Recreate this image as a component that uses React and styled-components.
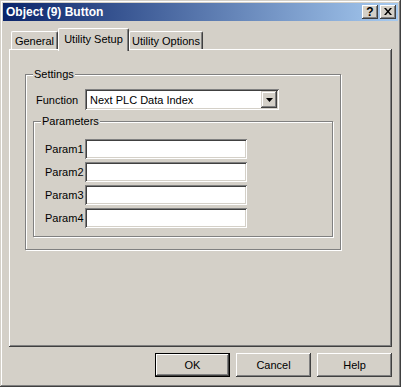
import React from 'react';
import styled, { createGlobalStyle } from 'styled-components';

const GlobalStyle = createGlobalStyle`
	html, body {
		margin: 0;
		padding: 0;
		background: #d4d0c8;
	}
	body {
		font-family: "Liberation Sans", Arial, sans-serif;
		font-size: 11px;
		color: #000;
	}
`;

const raised = `
	box-shadow: inset -1px -1px #404040, inset 1px 1px #fff, inset -2px -2px #808080;
`;

const sunken = `
	box-shadow: inset 1px 1px #808080, inset -1px -1px #fff, inset 2px 2px #404040, inset -2px -2px #d4d0c8;
`;

const params = ['Param1', 'Param2', 'Param3', 'Param4'];

export default function App() {
	return (
		<>
			<GlobalStyle />
			<Window>
				<TitleBar>
					<Title>Object (9) Button</Title>
					<CaptionButtons>
						<CaptionButton>?</CaptionButton>
						<CaptionButton>
							<svg width="8" height="7" viewBox="0 0 8 7">
								<path d="M0 0h2l2 2.5L6 0h2L5 3.5 8 7H6L4 4.5 2 7H0l3-3.5z" fill="#000" />
							</svg>
						</CaptionButton>
					</CaptionButtons>
				</TitleBar>
				<Body>
					<TabStrip>
						<Tab $w={47}>General</Tab>
						<Tab $w={71} $active>Utility Setup</Tab>
						<Tab $w={74}>Utility Options</Tab>
					</TabStrip>
					<TabPanel>
						<GroupBox $w={316}>
							<Legend>Settings</Legend>
							<FunctionRow>
								<FunctionLabel>Function</FunctionLabel>
								<Combo>
									<ComboText>Next PLC Data Index</ComboText>
									<ComboButton>
										<svg width="7" height="4" viewBox="0 0 7 4">
											<path d="M0 0h7L3.5 4z" fill="#000" />
										</svg>
									</ComboButton>
								</Combo>
							</FunctionRow>
							<GroupBox $w={300} $inner>
								<Legend>Parameters</Legend>
								<ParamList>
									{params.map(p => (
										<ParamRow key={p}>
											<ParamLabel>{p}</ParamLabel>
											<TextInput />
										</ParamRow>
									))}
								</ParamList>
							</GroupBox>
						</GroupBox>
					</TabPanel>
					<ButtonRow>
						<PushButton $default>OK</PushButton>
						<PushButton>Cancel</PushButton>
						<PushButton>Help</PushButton>
					</ButtonRow>
				</Body>
			</Window>
		</>
	);
}

const Window = styled.div`
	width: 401px;
	height: 387px;
	box-sizing: border-box;
	padding: 3px;
	background: #d4d0c8;
	box-shadow: inset -1px -1px #404040, inset 1px 1px #d4d0c8, inset -2px -2px #808080, inset 2px 2px #fff;
	display: flex;
	flex-direction: column;
`;

const TitleBar = styled.div`
	height: 18px;
	background: linear-gradient(to right, #0a246a, #a6caf0);
	display: flex;
	align-items: center;
	justify-content: space-between;
	padding: 0 2px;
`;

const Title = styled.div`
	color: #fff;
	font-weight: bold;
	font-size: 12px;
	padding-left: 1px;
`;

const CaptionButtons = styled.div`
	display: flex;
	gap: 2px;
`;

const CaptionButton = styled.div`
	width: 16px;
	height: 14px;
	box-sizing: border-box;
	background: #d4d0c8;
	${raised}
	display: flex;
	align-items: center;
	justify-content: center;
	font-weight: bold;
	font-size: 12px;
	padding-bottom: 1px;
`;

const Body = styled.div`
	flex: 1;
	display: flex;
	flex-direction: column;
	padding: 7px 6px 0 6px;
`;

const TabStrip = styled.div`
	display: flex;
	align-items: flex-end;
	height: 21px;
	padding-left: 2px;
	position: relative;
	z-index: 1;
`;

const Tab = styled.div`
	width: ${p => p.$w}px;
	height: ${p => (p.$active ? 23 : 18)}px;
	margin-bottom: ${p => (p.$active ? -2 : 0)}px;
	box-sizing: border-box;
	background: #d4d0c8;
	border-left: 1px solid #fff;
	border-top: 1px solid #fff;
	border-right: 1px solid #404040;
	border-radius: 2px 2px 0 0;
	box-shadow: inset -1px 0 #808080;
	display: flex;
	justify-content: center;
	padding-top: ${p => (p.$active ? 4 : 3)}px;
	white-space: nowrap;
`;

const TabPanel = styled.div`
	width: 383px;
	height: 298px;
	box-sizing: border-box;
	background: #d4d0c8;
	${raised}
	padding: 19px 0 0 16px;
`;

const GroupBox = styled.fieldset`
	width: ${p => p.$w}px;
	box-sizing: border-box;
	margin: ${p => (p.$inner ? '5px 0 0 0' : '0')};
	padding: ${p => (p.$inner ? '11px 7px 8px 7px' : '8px 7px 12px 7px')};
	min-inline-size: 0;
	border: 1px solid #808080;
	box-shadow: inset 1px 1px #fff, 1px 1px #fff;
`;

const Legend = styled.legend`
	padding: 0 1px;
	background: #d4d0c8;
	line-height: 13px;
	font-size: 11px;
`;

const FunctionRow = styled.div`
	display: flex;
	align-items: center;
	height: 21px;
	padding-left: 3px;
`;

const FunctionLabel = styled.span`
	width: 49px;
`;

const Combo = styled.div`
	width: 194px;
	height: 21px;
	box-sizing: border-box;
	background: #fff;
	${sunken}
	display: flex;
	align-items: center;
	justify-content: space-between;
	padding: 2px;
`;

const ComboText = styled.span`
	padding-left: 3px;
`;

const ComboButton = styled.div`
	width: 16px;
	height: 17px;
	box-sizing: border-box;
	background: #d4d0c8;
	box-shadow: inset -1px -1px #404040, inset 1px 1px #d4d0c8, inset -2px -2px #808080, inset 2px 2px #fff;
	display: flex;
	align-items: center;
	justify-content: center;
`;

const ParamList = styled.div`
	display: flex;
	flex-direction: column;
	gap: 3px;
	padding-left: 4px;
`;

const ParamRow = styled.div`
	display: flex;
	align-items: center;
	height: 20px;
`;

const ParamLabel = styled.span`
	width: 40px;
`;

const TextInput = styled.div`
	width: 162px;
	height: 20px;
	box-sizing: border-box;
	background: #fff;
	${sunken}
`;

const ButtonRow = styled.div`
	display: flex;
	justify-content: flex-end;
	gap: 6px;
	width: 383px;
	margin-top: 6px;
`;

const PushButton = styled.div`
	width: 75px;
	height: 24px;
	box-sizing: border-box;
	background: #d4d0c8;
	display: flex;
	align-items: center;
	justify-content: center;
	border: ${p => (p.$default ? '1px solid #000' : 'none')};
	${raised}
`;
